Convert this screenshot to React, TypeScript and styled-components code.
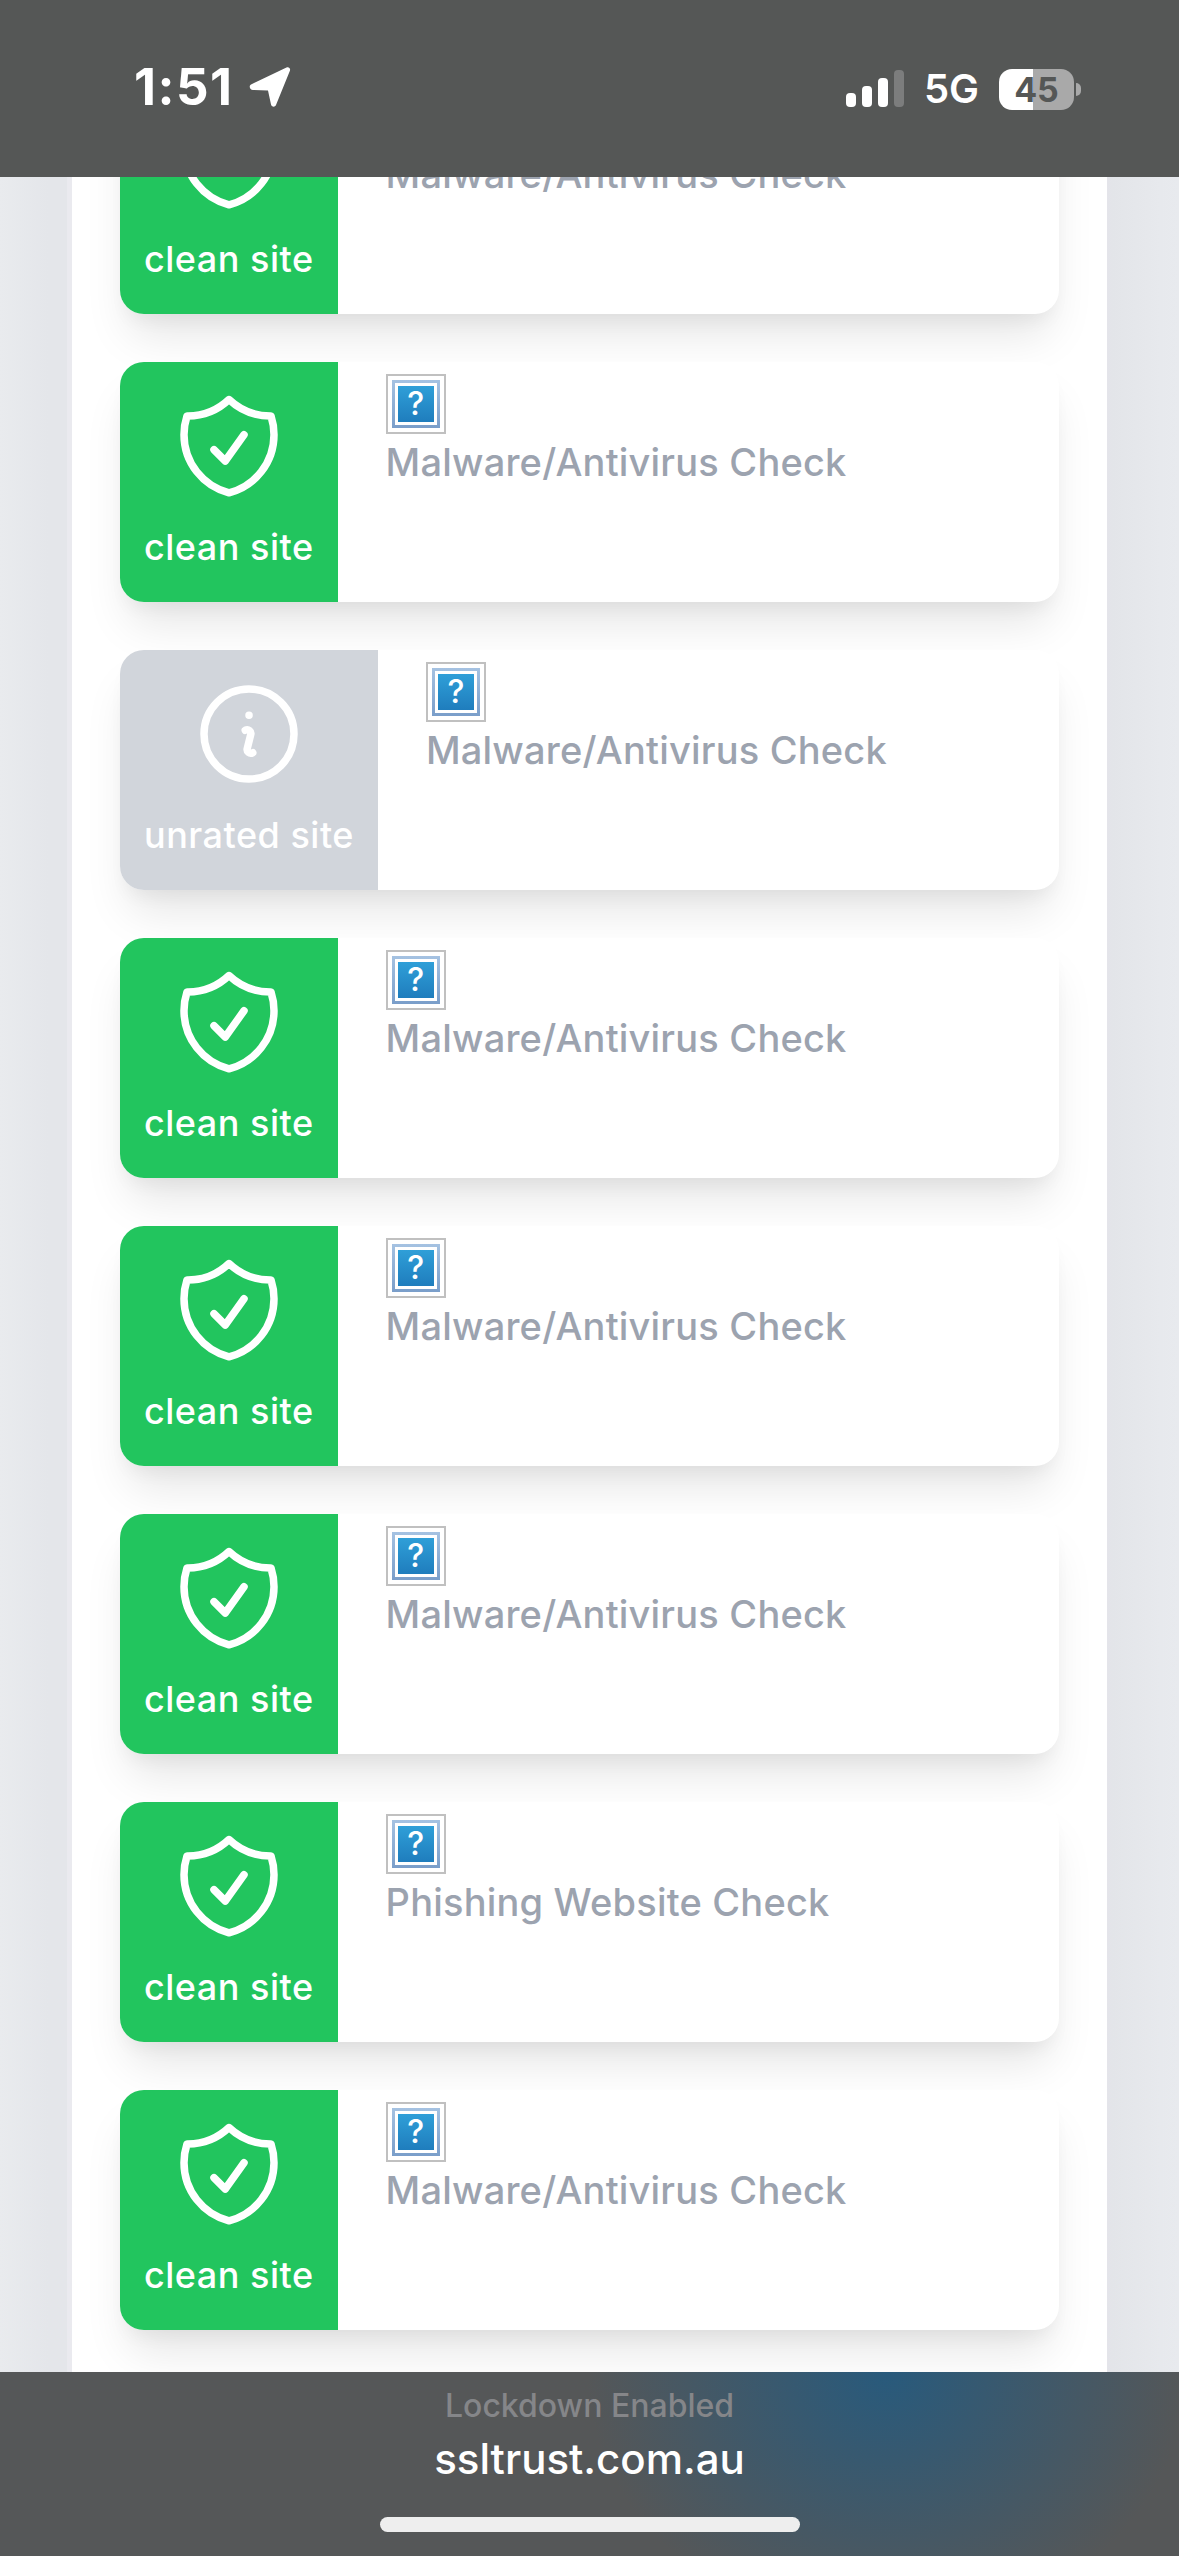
import * as React from 'react';
import styled, { createGlobalStyle } from 'styled-components';
import { HiOutlineShieldCheck, HiOutlineInformationCircle } from 'react-icons/hi2';

const REPORTS = [
  { rating: 'clean', title: 'Malware/Antivirus Check' },
  { rating: 'clean', title: 'Malware/Antivirus Check' },
  { rating: 'unrated', title: 'Malware/Antivirus Check' },
  { rating: 'clean', title: 'Malware/Antivirus Check' },
  { rating: 'clean', title: 'Malware/Antivirus Check' },
  { rating: 'clean', title: 'Malware/Antivirus Check' },
  { rating: 'clean', title: 'Phishing Website Check' },
  { rating: 'clean', title: 'Malware/Antivirus Check' },
];

const App: React.FC = () => (
  <Screen>
    <GlobalStyle />
    <StatusBar>
      <Clock>
        1:51
        <svg width="44" height="44" viewBox="0 0 44 44">
          <path
            d="M3 19.500 38.500 2.500c2.200-1 4.300 1 3.400 3.200L28 40c-1 2.500-4.400 2.200-5-.4L20 25.500 5 25c-3-.1-4.500-4-2-5.500Z"
            fill="#fff"
          />
        </svg>
      </Clock>
      <StatusIcons>
        <svg width="58" height="38" viewBox="0 0 58 38">
          <rect x="0" y="23" width="10" height="14" rx="4" fill="#fff" />
          <rect x="16" y="16" width="10" height="21" rx="4" fill="#fff" />
          <rect x="32" y="8" width="10" height="29" rx="4" fill="#fff" />
          <rect x="48" y="0" width="10" height="37" rx="4" fill="#7c7d7d" />
        </svg>
        <Network>5G</Network>
        <Battery>45</Battery>
      </StatusIcons>
    </StatusBar>
    <Viewport>
      <Column>
        {REPORTS.map((report, i) => (
          <Card key={i}>
            <Badge rating={report.rating}>
              {report.rating === 'clean' ? <HiOutlineShieldCheck /> : <HiOutlineInformationCircle />}
              <BadgeLabel>{report.rating} site</BadgeLabel>
            </Badge>
            <CardBody>
              <BrokenImage>
                <BrokenFrame>
                  <BrokenTile>?</BrokenTile>
                </BrokenFrame>
              </BrokenImage>
              <Title>{report.title}</Title>
            </CardBody>
          </Card>
        ))}
      </Column>
    </Viewport>
    <AddressBar>
      <Lockdown>Lockdown Enabled</Lockdown>
      <Domain>ssltrust.com.au</Domain>
      <HomeIndicator />
    </AddressBar>
  </Screen>
);

const GlobalStyle = createGlobalStyle`
  html, body {
    margin: 0;
    padding: 0;
    background: #e5e7eb;
  }
  * {
    box-sizing: border-box;
  }
`;

const Screen = styled.div`
  display: flex;
  flex-direction: column;
  width: 1179px;
  height: 2556px;
  overflow: hidden;
  font-family: Inter, "Liberation Sans", sans-serif;
`;

const StatusBar = styled.div`
  flex: 0 0 177px;
  display: flex;
  justify-content: space-between;
  align-items: flex-start;
  padding: 60px 98px 0 134px;
  background-color: #555756;
  color: #fff;
`;

const Clock = styled.div`
  display: flex;
  align-items: center;
  gap: 14px;
  height: 54px;
  font-size: 51px;
  font-weight: 700;
  letter-spacing: 1.5px;
  line-height: 54px;
`;

const StatusIcons = styled.div`
  display: flex;
  align-items: center;
  height: 50px;
  margin-top: 4px;
  gap: 20px;
`;

const Network = styled.span`
  font-size: 40px;
  font-weight: 600;
  line-height: 50px;
`;

const Battery = styled.div`
  position: relative;
  width: 75px;
  height: 41px;
  margin-right: 7px;
  border-radius: 13px;
  background: linear-gradient(to right, #fff 0 34px, #a9a9a9 34px);
  color: #555756;
  font-size: 34px;
  font-weight: 700;
  line-height: 41px;
  text-align: center;

  &::after {
    content: '';
    position: absolute;
    top: 14px;
    right: -7px;
    width: 5px;
    height: 13px;
    border-radius: 0 6px 6px 0;
    background-color: #a9a9a9;
  }
`;

const Viewport = styled.div`
  flex: 1 1 auto;
  min-height: 0;
  overflow: hidden;
  background: linear-gradient(
    to right,
    #e9ebee 0,
    #e4e6ea 48px,
    #e4e6ea 67px,
    #eaeaef 67px,
    #eaeaef 72px,
    #e4e4ea 1107px,
    #e3e5e9 1112px,
    #e7e9ed 1160px,
    #e8eaee 1179px
  );
`;

const Column = styled.div`
  display: flex;
  flex-direction: column;
  gap: 48px;
  width: 1035px;
  margin: -103px 0 0 72px;
  padding: 0 48px 48px;
  background-color: #fff;
`;

const Card = styled.div`
  display: flex;
  flex: 0 0 240px;
  overflow: hidden;
  border-radius: 24px;
  background-color: #fff;
  box-shadow: 0 30px 45px -9px rgba(0, 0, 0, 0.1), 0 12px 18px -6px rgba(0, 0, 0, 0.05);
`;

const Badge = styled.div<{ rating: string }>`
  display: flex;
  flex-direction: column;
  align-items: center;
  padding: 24px 24px 0;
  background-color: ${props => (props.rating === 'clean' ? '#22c55e' : '#d1d5db')};
  color: #fff;

  svg {
    flex: 0 0 auto;
    width: 120px;
    height: 120px;
  }
`;

const BadgeLabel = styled.div`
  margin-top: 17px;
  font-size: 36px;
  font-weight: 500;
  line-height: 48px;
  letter-spacing: 0.5px;
  white-space: nowrap;
`;

const CardBody = styled.div`
  flex: 1 1 auto;
  padding: 12px 48px;
`;

const BrokenImage = styled.div`
  display: flex;
  align-items: center;
  justify-content: center;
  width: 60px;
  height: 60px;
  border: 2px solid #c0c0c0;
`;

const BrokenFrame = styled.div`
  width: 48px;
  height: 48px;
  padding: 3px;
  background: linear-gradient(#a5c2e2, #7a9eca);
`;

const BrokenTile = styled.div`
  width: 42px;
  height: 42px;
  border: 3px solid #fff;
  background: linear-gradient(#2f9fd8, #1f7dbd);
  color: #fff;
  font-size: 32px;
  font-weight: 500;
  line-height: 36px;
  text-align: center;
`;

const Title = styled.div`
  margin-top: 4px;
  color: #9ca3af;
  font-size: 38px;
  font-weight: 500;
  line-height: 48px;
  letter-spacing: 0.2px;
  white-space: nowrap;
`;

const AddressBar = styled.div`
  flex: 0 0 184px;
  display: flex;
  flex-direction: column;
  align-items: center;
  background: radial-gradient(ellipse 300px 260px at 887px 0, #285a7c 0%, rgba(85, 87, 88, 0) 100%), #555758;
`;

const Lockdown = styled.div`
  margin-top: 16px;
  color: #858689;
  font-size: 32px;
  font-weight: 500;
  line-height: 36px;
`;

const Domain = styled.div`
  margin-top: 11px;
  color: #fff;
  font-size: 42px;
  font-weight: 500;
  line-height: 48px;
`;

const HomeIndicator = styled.div`
  width: 420px;
  height: 15px;
  margin-top: 34px;
  border-radius: 8px;
  background-color: #eee;
`;

export default App;
